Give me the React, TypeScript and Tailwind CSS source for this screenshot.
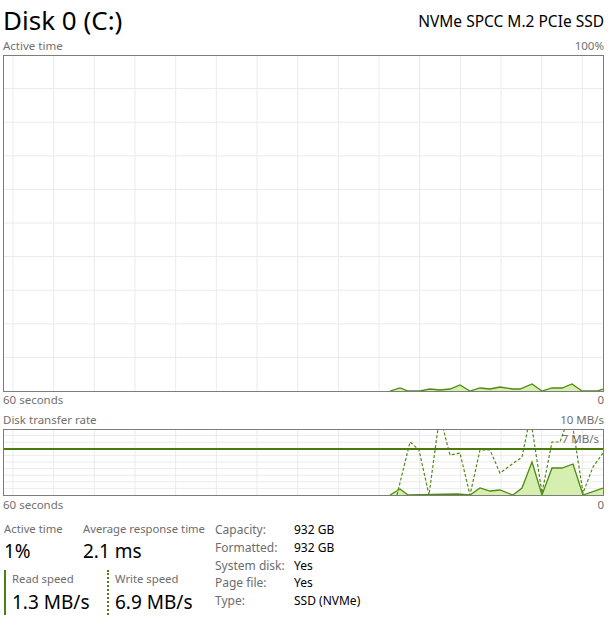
import React from "react";

const font = { fontFamily: '"Segoe UI", "Noto Sans", "Open Sans", sans-serif' };

// grid positions in page coordinates
const gridX = Array.from({ length: 15 }, (_, k) => 13 + k * 40.67);

const activePts: [number, number][] = [
  [390, 391], [400, 388], [408, 391], [420, 391], [430, 389], [440, 390],
  [450, 389], [460, 385], [470, 391], [480, 388], [490, 389], [500, 387],
  [513, 389], [520, 389], [532, 384], [542, 391], [552, 388], [562, 388],
  [572, 384], [582, 391], [597, 391], [603, 389],
];

const readPts: [number, number][] = [
  [390, 495], [400, 489], [408, 495], [457, 494], [470, 495], [480, 488],
  [490, 491], [500, 490], [513, 495], [522, 488], [532, 462], [542, 495],
  [552, 468], [562, 468], [573, 464], [583, 495], [603, 488],
];

const writePts: [number, number][] = [
  [397, 495], [410, 442], [419, 450], [429, 495], [438, 428], [443, 428],
  [450, 455], [460, 453], [470, 495], [480, 450], [490, 450], [500, 473],
  [522, 457], [528, 428], [532, 428], [542, 493], [552, 442], [560, 442],
  [565, 428], [573, 428], [583, 493], [593, 467], [603, 453],
];

const toStr = (pts: [number, number][]) => pts.map((p) => p.join(",")).join(" ");

const fillStr = (pts: [number, number][], base: number) =>
  `${pts[0][0]},${base} ` + toStr(pts) + ` ${pts[pts.length - 1][0]},${base}`;

const ActiveChart = () => (
  <div className="w-[601px] h-[337px] border border-[#7d7d7d]">
    <svg width="599" height="335" viewBox="4 56 599 335" className="block">
      {gridX.map((x) => (
        <line key={x} x1={x} x2={x} y1={56} y2={391} stroke="#ebebeb" strokeWidth="1" />
      ))}
      {Array.from({ length: 9 }, (_, j) => 55 + (j + 1) * 33.6).map((y) => (
        <line key={y} x1={4} x2={603} y1={y} y2={y} stroke="#ebebeb" strokeWidth="1" />
      ))}
      <polygon points={fillStr(activePts, 391)} fill="#d6efb0" />
      <polyline points={toStr(activePts)} fill="none" stroke="#4f8a12" strokeWidth="1.3" />
    </svg>
  </div>
);

const TransferChart = () => (
  <div className="relative w-[601px] h-[67px] border border-[#7d7d7d]">
    <svg width="599" height="65" viewBox="4 430 599 65" className="block">
      {gridX.map((x) => (
        <line key={x} x1={x} x2={x} y1={430} y2={495} stroke="#ebebeb" strokeWidth="1" />
      ))}
      {Array.from({ length: 9 }, (_, j) => 429 + (j + 1) * 6.6).map((y) => (
        <line key={y} x1={4} x2={603} y1={y} y2={y} stroke="#ebebeb" strokeWidth="1" />
      ))}
      <polygon points={fillStr(readPts, 495)} fill="#d6efb0" />
      <polyline points={toStr(readPts)} fill="none" stroke="#4f8a12" strokeWidth="1.3" />
      <polyline
        points={toStr(writePts)}
        fill="none"
        stroke="#4f8a12"
        strokeWidth="1.2"
        strokeDasharray="3 2"
      />
      <rect x="4" y="448" width="599" height="2" fill="#4a7a0c" />
    </svg>
    <span className="absolute right-[4px] top-[1px] text-[11.5px] leading-[16px] text-[#707070]">
      7 MB/s
    </span>
  </div>
);

const AxisRow = ({ left, right }: { left: string; right: string }) => (
  <div className="flex justify-between w-[601px] text-[11.5px] leading-[16px] text-[#707070]">
    <span>{left}</span>
    <span>{right}</span>
  </div>
);

const Stat = ({ label, value, gap = false }: { label: string; value: string; gap?: boolean }) => (
  <div className="flex flex-col">
    <span className="text-[11.3px] leading-[16px] text-[#6d6d6d] whitespace-nowrap">{label}</span>
    <span
      className={
        gap
          ? "mt-[2px] text-[19px] leading-[26px] text-black whitespace-nowrap"
          : "text-[19px] leading-[28px] text-black whitespace-nowrap"
      }
    >
      {value}
    </span>
  </div>
);

const specs = [
  ["Capacity:", "932 GB"],
  ["Formatted:", "932 GB"],
  ["System disk:", "Yes"],
  ["Page file:", "Yes"],
  ["Type:", "SSD (NVMe)"],
];

export default function App() {
  return (
    <div className="w-[610px] h-[628px] overflow-hidden bg-white pl-[3px]" style={font}>
      <div className="flex justify-between items-end w-[601px] h-[37px]">
        <span className="text-[26px] leading-[34px] text-black">Disk 0 (C:)</span>
        <span className="text-[15.5px] leading-[22px] text-black mb-[5px]">NVMe SPCC M.2 PCIe SSD</span>
      </div>
      <div className="mt-[1px] mb-[1px]">
        <AxisRow left="Active time" right="100%" />
      </div>
      <ActiveChart />
      <AxisRow left="60 seconds" right="0" />
      <div className="mt-[4px] mb-[1px]">
        <AxisRow left="Disk transfer rate" right="10 MB/s" />
      </div>
      <TransferChart />
      <div className="mt-[1px]">
        <AxisRow left="60 seconds" right="0" />
      </div>

      <div className="flex mt-[8px] pl-[1px]">
        <div className="flex flex-col w-[211px]">
          <div className="flex">
            <div className="w-[79px]">
              <Stat label="Active time" value="1%" />
            </div>
            <Stat label="Average response time" value="2.1 ms" />
          </div>
          <div className="flex mt-[5px]">
            <div className="w-[103px] border-l-2 border-[#4f7f10] pl-[6px] pt-[1px]">
              <Stat label="Read speed" value="1.3 MB/s" gap />
            </div>
            <div className="border-l-2 border-dotted border-[#4f7f10] pl-[6px] pt-[1px]">
              <Stat label="Write speed" value="6.9 MB/s" gap />
            </div>
          </div>
        </div>
        <div className="flex flex-col">
          {specs.map(([k, v]) => (
            <div key={k} className="flex text-[12px] leading-[17.8px]">
              <span className="w-[79px] text-[#6d6d6d]">{k}</span>
              <span className="text-black">{v}</span>
            </div>
          ))}
        </div>
      </div>
    </div>
  );
}
